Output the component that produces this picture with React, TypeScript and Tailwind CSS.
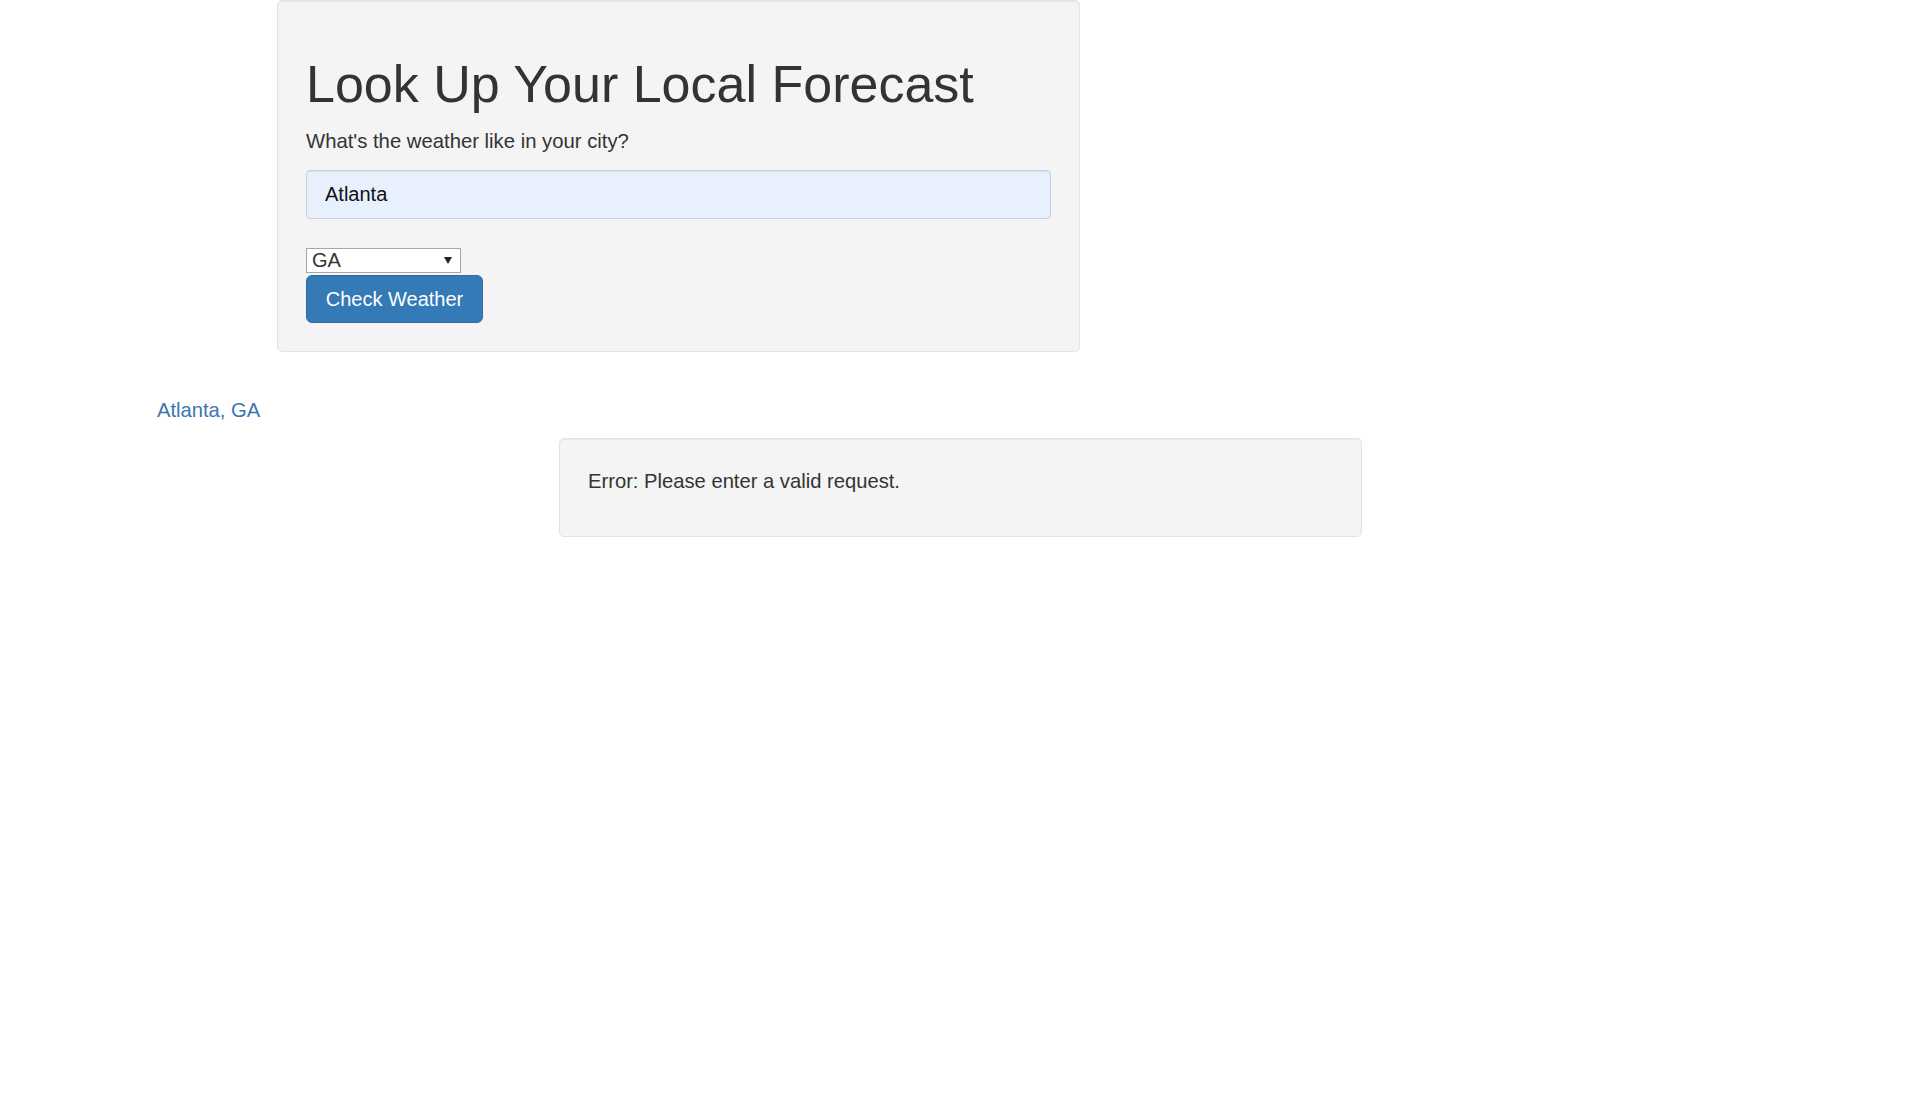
const font = { fontFamily: '"Liberation Sans", Arial, sans-serif' };

const App = () => {
	return (
		<div className="min-h-screen bg-white text-[#333]" style={font}>
			<div className="ml-[277px] w-[803px] rounded-[5px] border border-[#e3e3e3] bg-[#f4f4f4] px-[28px] pt-[55px] pb-[28px] shadow-[inset_0_1px_1px_rgba(0,0,0,0.05)]">
				<h1 className="text-[52px] leading-[57px] font-normal text-[#333]">Look Up Your Local Forecast</h1>
				<p className="mt-[14px] text-[20.3px] leading-[28px] text-[#333]">What's the weather like in your city?</p>
				<input
					className="mt-[15px] block h-[49px] w-full rounded-[4px] border border-[#c8d0db] bg-[#e8f0fe] pl-[18px] text-[20px] text-[#111] outline-none shadow-[inset_0_1px_1px_rgba(0,0,0,0.075)]"
					defaultValue="Atlanta"
					style={font}
				/>
				<div className="relative mt-[29px] h-[25px] w-[155px]">
					<select
						className="block h-[25px] w-[155px] appearance-none border border-[#a6a6a6] bg-white pl-[5px] text-[20px] leading-[23px] text-[#333] outline-none"
						defaultValue="GA"
						style={font}
					>
						<option value="GA">GA</option>
					</select>
					<svg className="pointer-events-none absolute right-[9px] top-[9px]" width="8" height="7" viewBox="0 0 8 7">
						<polygon points="0,0 8,0 4,7" fill="#222" />
					</svg>
				</div>
				<button
					className="mt-[2px] block h-[48px] w-[177px] rounded-[6px] border border-[#2e6da4] bg-[#337ab7] text-[20px] text-white"
					style={font}
				>
					Check Weather
				</button>
			</div>

			<div className="ml-[157px] mt-[44px] text-[20.2px] leading-[28px] text-[#3a75b3]">Atlanta, GA</div>

			<div className="ml-[559px] mt-[14px] w-[803px] rounded-[5px] border border-[#e3e3e3] bg-[#f4f4f4] px-[28px] pt-[28px] pb-[41px] shadow-[inset_0_1px_1px_rgba(0,0,0,0.05)]">
				<p className="text-[20.2px] leading-[28px] text-[#333]">Error: Please enter a valid request.</p>
			</div>
		</div>
	);
};

export default App;
